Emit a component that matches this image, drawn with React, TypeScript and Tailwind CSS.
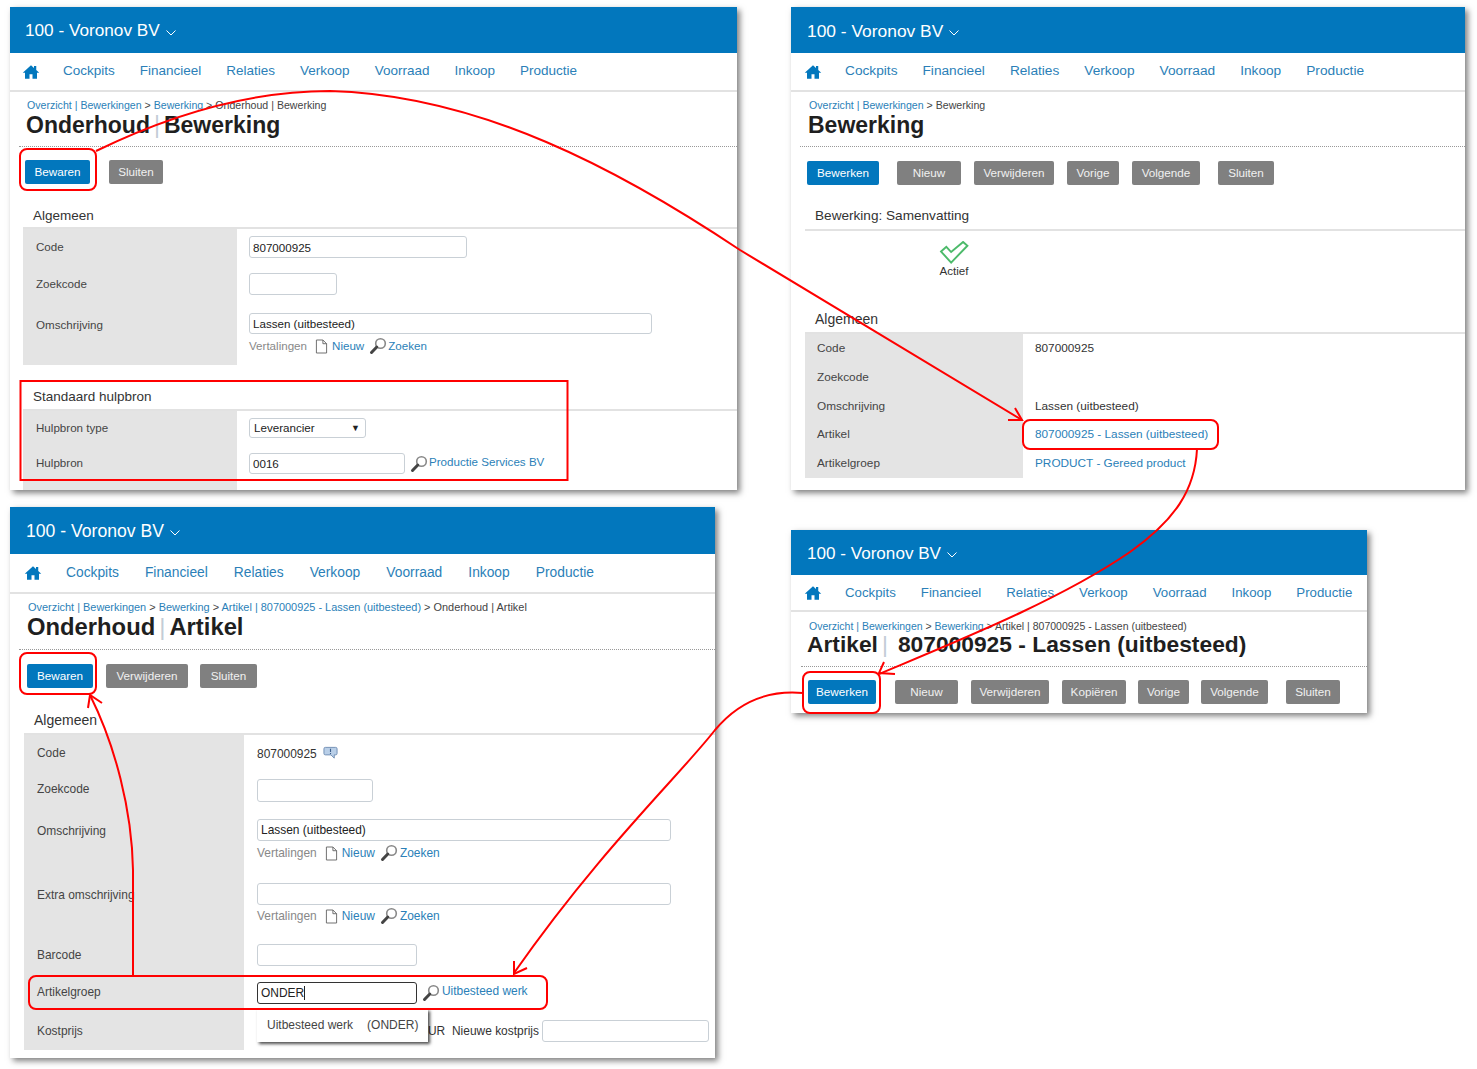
import React from "react";

const blue = "bg-[#0277bd]";

function HomeIcon() {
  return (
    <svg viewBox="0 0 24 24" className="h-[18px] w-[18px] fill-[#0277bd]">
      <path d="M12 3 1 13h3v8h6v-6h4v6h6v-8h3l-4-3.6V4h-3v2.7z" />
    </svg>
  );
}

function SearchIcon() {
  return (
    <svg viewBox="0 0 18 18" className="h-[18px] w-[18px] shrink-0">
      <circle cx="11.5" cy="6.5" r="4.8" fill="#fff" stroke="#888" strokeWidth="1.6" />
      <path d="M7.800 10 2.500 15.500" stroke="#444" strokeWidth="3" strokeLinecap="round" />
    </svg>
  );
}

function DocIcon() {
  return (
    <svg viewBox="0 0 14 16" className="h-[15px] w-[13px] shrink-0">
      <path d="M1.500 1h7l4 4v10h-11z" fill="#fff" stroke="#666" />
      <path d="M8.500 1v4h4" fill="none" stroke="#666" />
    </svg>
  );
}

function NoteIcon() {
  return (
    <svg viewBox="0 0 16 14" className="h-[14px] w-[15px]">
      <path d="M2.500 1h11a1.500 1.500 0 0 1 1.500 1.500v5A1.500 1.500 0 0 1 13.500 9H12v3.500L8.500 9h-6A1.500 1.500 0 0 1 1 7.500v-5A1.500 1.500 0 0 1 2.500 1z" fill="#b9cfe8" stroke="#6f8db3" />
      <path d="M8 2.500v3.500M8 7v1" stroke="#3d5f8c" strokeWidth="1.200" />
    </svg>
  );
}

function TopBars({ header, nav, title, navText, navGap, home }: { header: string; nav: string; title: string; navText: string; navGap: string; home: string }) {
  const items = ["Cockpits", "Financieel", "Relaties", "Verkoop", "Voorraad", "Inkoop", "Productie"];
  return (
    <>
      <div className={`${blue} flex items-center pt-[2px] text-white ${header} ${title}`}>
        <span>100 - Voronov BV</span>
        <svg viewBox="0 0 10 6" className="ml-[6px] mt-[3px] h-[6px] w-[10px] fill-none stroke-white">
          <path d="M.5.5 5 5 9.500.5" />
        </svg>
      </div>
      <div className={`flex items-center border-b-2 border-[#e2e2e2] text-[#2b7fb8] ${nav} ${navText}`}>
        <span className={`flex ${home}`}><HomeIcon /></span>
        <div className={`flex ${navGap}`}>
          {items.map((item) => (
            <span key={item}>{item}</span>
          ))}
        </div>
      </div>
    </>
  );
}

function Btn({ label, w, primary, mr }: { label: string; w: string; primary?: boolean; mr?: string }) {
  return (
    <div className={`flex h-[24px] items-center justify-center rounded-[2px] text-[11.700px] ${w} ${mr ?? ""} ${primary ? "bg-[#0277bd] text-white" : "bg-[#808080] text-[#f0f0f0]"}`}>
      {label}
    </div>
  );
}

function Crumb({ links, rest, className }: { links: string[]; rest: string; className: string }) {
  return (
    <div className={`whitespace-nowrap text-[#444] ${className}`}>
      {links.map((l, i) => (
        <span key={l}>
          {i > 0 && " > "}
          <span className="text-[#2b7fb8]">{l}</span>
        </span>
      ))}
      {" > "}
      {rest}
    </div>
  );
}

function Title({ left, right, className }: { left: string; right: string; className: string }) {
  return (
    <div className={`whitespace-nowrap font-bold text-[#1f1f1f] ${className}`}>
      {left}
      <span className="mx-[4px] font-normal text-[#c3ccd6]">|</span>
      {right}
    </div>
  );
}

function Section({ children, className }: { children: string; className: string }) {
  return <div className={`border-b-2 border-[#e2e2e2] leading-[18px] text-[#333] ${className}`}>{children}</div>;
}

function Row({ label, h, labelCls, valueCls, size = "text-[11.600px]", children }: { label: string; h: string; labelCls: string; valueCls: string; size?: string; children?: React.ReactNode }) {
  return (
    <div className={`flex leading-[16px] ${h} ${size}`}>
      <div className={`shrink-0 whitespace-nowrap bg-[#e4e4e4] text-[#444] ${labelCls}`}>{label}</div>
      <div className={`min-w-0 flex-1 text-[#333] ${valueCls}`}>{children}</div>
    </div>
  );
}

function Field({ w, h, value, dark }: { w: string; h: string; value?: string; dark?: boolean }) {
  return (
    <input
      readOnly
      value={value ?? ""}
      className={`block rounded-[3px] border bg-white px-[3px] text-[#222] outline-none ${w} ${h} ${dark ? "border-[#333]" : "border-[#c9d0d6]"}`}
    />
  );
}

function Translations({ className, zoekenGap = "mr-[1px]" }: { className: string; zoekenGap?: string }) {
  return (
    <div className={`flex items-center leading-[16px] ${className}`}>
      <span className="text-[#888]">Vertalingen</span>
      <span className="ml-[8px] mr-[4px]"><DocIcon /></span>
      <span className="text-[#2b7fb8]">Nieuw</span>
      <span className={`ml-[5px] ${zoekenGap}`}><SearchIcon /></span>
      <span className="text-[#2b7fb8]">Zoeken</span>
    </div>
  );
}

function EditBewerking() {
  return (
    <div className="absolute left-[10px] top-[7px] h-[483px] w-[727px] overflow-hidden bg-white shadow-[3px_3px_6px_rgba(0,0,0,0.5)]">
      <TopBars header="h-[46px] pl-[15px]" title="text-[17.200px]" nav="h-[39px] pl-[12px]" navText="text-[13.500px]" navGap="gap-[25px]" home="mr-[23px]" />
      <div className="h-[55px] border-b border-dotted border-[#999] ml-[9px] pl-[8px] pt-[6px]">
        <Crumb links={["Overzicht | Bewerkingen", "Bewerking"]} rest="Onderhoud | Bewerking" className="text-[10.600px] leading-[14px]" />
        <Title left="Onderhoud" right="Bewerking" className="text-[23px] leading-[26px] -ml-[1px]" />
      </div>
      <div className="flex pl-[15px] pt-[13px]">
        <Btn label="Bewaren" w="w-[65px]" primary mr="mr-[19px]" />
        <Btn label="Sluiten" w="w-[54px]" />
      </div>
      <Section className="ml-[13px] mt-[23px] h-[22px] pl-[10px] text-[13.500px]">Algemeen</Section>
      <div className="ml-[13px]">
        <Row label="Code" h="h-[37px]" labelCls="w-[214px] pl-[13px] pt-[10px]" valueCls="pl-[12px] pt-[7px]">
          <Field w="w-[218px]" h="h-[22px]" value="807000925" />
        </Row>
        <Row label="Zoekcode" h="h-[37px]" labelCls="w-[214px] pl-[13px] pt-[10px]" valueCls="pl-[12px] pt-[7px]">
          <Field w="w-[88px]" h="h-[22px]" />
        </Row>
        <Row label="Omschrijving" h="h-[62px]" labelCls="w-[214px] pl-[13px] pt-[14px]" valueCls="pl-[12px] pt-[10px]">
          <Field w="w-[403px]" h="h-[21px]" value="Lassen (uitbesteed)" />
          <Translations className="mt-[3px]" />
        </Row>
      </div>
      <Section className="ml-[13px] mt-[23px] h-[23px] pl-[10px] text-[13.500px]">Standaard hulpbron</Section>
      <div className="ml-[13px]">
        <Row label="Hulpbron type" h="h-[35px]" labelCls="w-[214px] pl-[13px] pt-[9px]" valueCls="pl-[12px] pt-[7px]">
          <div className="flex h-[20px] w-[117px] items-center justify-between rounded-[3px] border border-[#c9d0d6] pl-[4px] pr-[5px] text-[#222]">
            <span>Leverancier</span>
            <span className="text-[9px]">▼</span>
          </div>
        </Row>
        <Row label="Hulpbron" h="h-[44px]" labelCls="w-[214px] pl-[13px] pt-[9px]" valueCls="flex items-start pl-[12px] pt-[7px]">
          <Field w="w-[156px]" h="h-[21px]" value="0016" />
          <span className="ml-[5px] mr-[1px] mt-[2px]"><SearchIcon /></span>
          <span className="mt-[1px] text-[#2b7fb8]">Productie Services BV</span>
        </Row>
      </div>
    </div>
  );
}

function ViewBewerking() {
  return (
    <div className="absolute left-[791px] top-[7px] h-[483px] w-[674px] overflow-hidden bg-white shadow-[3px_3px_6px_rgba(0,0,0,0.5)]">
      <TopBars header="h-[46px] pl-[16px]" title="text-[17.400px]" nav="h-[39px] pl-[13px]" navText="text-[13.700px]" navGap="gap-[25px]" home="mr-[23px]" />
      <div className="ml-[9px] h-[55px] border-b border-dotted border-[#999] pl-[9px] pt-[6px]">
        <Crumb links={["Overzicht | Bewerkingen"]} rest="Bewerking" className="text-[10.600px] leading-[14px]" />
        <div className="-ml-[1px] text-[23px] font-bold leading-[26px] text-[#1f1f1f]">Bewerking</div>
      </div>
      <div className="flex pl-[16px] pt-[14px]">
        <Btn label="Bewerken" w="w-[72px]" primary mr="mr-[18px]" />
        <Btn label="Nieuw" w="w-[64px]" mr="mr-[13px]" />
        <Btn label="Verwijderen" w="w-[80px]" mr="mr-[13px]" />
        <Btn label="Vorige" w="w-[52px]" mr="mr-[13px]" />
        <Btn label="Volgende" w="w-[68px]" mr="mr-[18px]" />
        <Btn label="Sluiten" w="w-[56px]" />
      </div>
      <Section className="ml-[14px] mt-[22px] h-[24px] pl-[10px] text-[13.600px]">Bewerking: Samenvatting</Section>
      <div className="ml-[14px] flex h-[79px] w-[298px] flex-col items-center pt-[10px]">
        <svg viewBox="0 0 30 24" className="h-[23px] w-[30px] fill-none stroke-[#4cba6a] stroke-[2]">
          <path d="M1.500 11 7 6l5 5.500L24.500 1 29 5 12 22.500z" />
        </svg>
        <span className="-mt-[1px] text-[11.600px] leading-[16px] text-[#333]">Actief</span>
      </div>
      <Section className="ml-[14px] h-[24px] pl-[10px] text-[14px]">Algemeen</Section>
      <div className="ml-[14px]">
        <Row label="Code" h="h-[29px]" size="text-[11.800px]" labelCls="w-[218px] pl-[12px] pt-[6px]" valueCls="pl-[12px] pt-[6px]">807000925</Row>
        <Row label="Zoekcode" h="h-[29px]" size="text-[11.800px]" labelCls="w-[218px] pl-[12px] pt-[6px]" valueCls="pl-[12px] pt-[6px]" />
        <Row label="Omschrijving" h="h-[29px]" size="text-[11.800px]" labelCls="w-[218px] pl-[12px] pt-[6px]" valueCls="pl-[12px] pt-[6px]">Lassen (uitbesteed)</Row>
        <Row label="Artikel" h="h-[29px]" size="text-[11.800px]" labelCls="w-[218px] pl-[12px] pt-[5px]" valueCls="pl-[12px] pt-[5px]">
          <span className="text-[#2b7fb8]">807000925 - Lassen (uitbesteed)</span>
        </Row>
        <Row label="Artikelgroep" h="h-[28px]" size="text-[11.800px]" labelCls="w-[218px] pl-[12px] pt-[5px]" valueCls="pl-[12px] pt-[5px]">
          <span className="text-[#2b7fb8]">PRODUCT - Gereed product</span>
        </Row>
      </div>
    </div>
  );
}

function EditArtikel() {
  const size = "text-[11.950px]";
  return (
    <div className="absolute left-[10px] top-[507px] h-[551px] w-[705px] overflow-hidden bg-white shadow-[3px_3px_6px_rgba(0,0,0,0.5)]">
      <TopBars header="h-[47px] pl-[16px]" title="text-[17.600px]" nav="h-[40px] pl-[14px]" navText="text-[13.800px]" navGap="gap-[26px]" home="mr-[24px]" />
      <div className="ml-[9px] h-[56px] border-b border-dotted border-[#999] pl-[9px] pt-[6px]">
        <Crumb links={["Overzicht | Bewerkingen", "Bewerking", "Artikel | 807000925 - Lassen (uitbesteed)"]} rest="Onderhoud | Artikel" className="text-[10.930px] leading-[14px]" />
        <Title left="Onderhoud" right="Artikel" className="text-[23.800px] leading-[26px] -ml-[1px]" />
      </div>
      <div className="flex pl-[17px] pt-[14px]">
        <Btn label="Bewaren" w="w-[66px]" primary mr="mr-[13px]" />
        <Btn label="Verwijderen" w="w-[82px]" mr="mr-[12px]" />
        <Btn label="Sluiten" w="w-[57px]" />
      </div>
      <Section className="ml-[14px] mt-[23px] h-[24px] pl-[10px] text-[14px]">Algemeen</Section>
      <div className="relative ml-[14px]">
        <Row label="Code" h="h-[36px]" size={size} labelCls="w-[220px] pl-[13px] pt-[10px]" valueCls="flex items-start gap-[6px] pl-[13px] pt-[11px]">
          807000925
          <NoteIcon />
        </Row>
        <Row label="Zoekcode" h="h-[38px]" size={size} labelCls="w-[220px] pl-[13px] pt-[10px]" valueCls="pl-[13px] pt-[8px]">
          <Field w="w-[116px]" h="h-[23px]" />
        </Row>
        <Row label="Omschrijving" h="h-[64px]" size={size} labelCls="w-[220px] pl-[13px] pt-[14px]" valueCls="pl-[13px] pt-[10px]">
          <Field w="w-[414px]" h="h-[22px]" value="Lassen (uitbesteed)" />
          <Translations className="mt-[3px]" zoekenGap="mr-[2px]" />
        </Row>
        <Row label="Extra omschrijving" h="h-[61px]" size={size} labelCls="w-[220px] pl-[13px] pt-[14px]" valueCls="pl-[13px] pt-[10px]">
          <Field w="w-[414px]" h="h-[22px]" />
          <Translations className="mt-[2px]" zoekenGap="mr-[2px]" />
        </Row>
        <Row label="Barcode" h="h-[38px]" size={size} labelCls="w-[220px] pl-[13px] pt-[13px]" valueCls="pl-[13px] pt-[10px]">
          <Field w="w-[160px]" h="h-[22px]" />
        </Row>
        <Row label="Artikelgroep" h="h-[39px]" size={size} labelCls="w-[220px] pl-[13px] pt-[12px]" valueCls="flex items-start pl-[13px] pt-[10px]">
          <div className="relative">
            <Field w="w-[160px]" h="h-[22px]" value="ONDER" dark />
            <span className="absolute left-[47px] top-[4px] h-[14px] w-px bg-[#222]" />
          </div>
          <span className="ml-[5px] mr-[2px] mt-[2px]"><SearchIcon /></span>
          <span className="mt-[1px] text-[#2b7fb8]">Uitbesteed werk</span>
        </Row>
        <Row label="Kostprijs" h="h-[39px]" size={size} labelCls="w-[220px] pl-[13px] pt-[12px]" valueCls="flex items-start pl-[184px] pt-[9px]">
          <span className="mt-[3px] w-[24px]">UR</span>
          <span className="mt-[3px] whitespace-nowrap">Nieuwe kostprijs</span>
          <span className="ml-[3px]"><Field w="w-[167px]" h="h-[22px]" /></span>
        </Row>
        <div className="absolute left-[233px] top-[274px] flex h-[33px] w-[171px] items-start bg-white pl-[10px] pt-[8px] text-[12px] leading-[16px] text-[#444] shadow-[2px_2px_3px_rgba(0,0,0,0.7)]">
          <span>Uitbesteed werk</span>
          <span className="ml-[14px]">(ONDER)</span>
        </div>
      </div>
    </div>
  );
}

function ViewArtikel() {
  return (
    <div className="absolute left-[791px] top-[530px] h-[183px] w-[576px] overflow-hidden bg-white shadow-[3px_3px_6px_rgba(0,0,0,0.5)]">
      <TopBars header="h-[45px] pl-[16px]" title="text-[17.100px]" nav="h-[37px] pl-[13px] pt-[1px]" navText="text-[13.250px]" navGap="gap-[25px]" home="mr-[23px]" />
      <div className="ml-[10px] h-[55px] border-b border-dotted border-[#999] pl-[8px] pt-[7px]">
        <Crumb links={["Overzicht | Bewerkingen", "Bewerking"]} rest="Artikel | 807000925 - Lassen (uitbesteed)" className="text-[10.500px] leading-[14px]" />
        <div className="-ml-[2px] whitespace-nowrap text-[22.800px] font-bold leading-[23px] text-[#1f1f1f]">
          Artikel
          <span className="ml-[4px] mr-[10px] font-normal text-[#c3ccd6]">|</span>
          807000925 - Lassen (uitbesteed)
        </div>
      </div>
      <div className="flex pl-[17px] pt-[13px]">
        <Btn label="Bewerken" w="w-[68px]" primary mr="mr-[19px]" />
        <Btn label="Nieuw" w="w-[63px]" mr="mr-[13px]" />
        <Btn label="Verwijderen" w="w-[78px]" mr="mr-[13px]" />
        <Btn label="Kopiëren" w="w-[64px]" mr="mr-[12px]" />
        <Btn label="Vorige" w="w-[51px]" mr="mr-[12px]" />
        <Btn label="Volgende" w="w-[67px]" mr="mr-[18px]" />
        <Btn label="Sluiten" w="w-[54px]" />
      </div>
    </div>
  );
}

// rode pijlen en kaders over de vensters heen
function Annotations() {
  return (
    <svg viewBox="0 0 1477 1069" className="absolute left-0 top-0 h-[1069px] w-[1477px] fill-none stroke-[#f00] stroke-[2]">
      <rect x="20" y="149" width="76" height="41" rx="7" />
      <rect x="20.500" y="381" width="547" height="99" />
      <path d="M96 151C170 115 250 91 330 91C480 95 620 170 740 250L1022 420" />
      <path d="M1015 408 1022 420 1008 420" />
      <rect x="1023" y="420" width="195" height="29" rx="7" />
      <path d="M1197 449C1195 490 1175 520 1130 552C1060 600 960 640 879 674" />
      <path d="M884 662 879 673 895 674" />
      <rect x="803" y="672" width="77" height="41" rx="7" />
      <path d="M803 693C770 690 740 700 715 730C680 775 600 850 514 973" />
      <path d="M514 961 514 974 527 968" />
      <rect x="29" y="976" width="518" height="33" rx="7" />
      <path d="M133 976V870C132 810 115 745 90 695" />
      <path d="M88 708 90 695 102 703" />
      <rect x="20" y="653" width="76" height="41" rx="7" />
    </svg>
  );
}

export default function App() {
  return (
    <div className="relative h-[1069px] w-[1477px] overflow-hidden bg-white font-['Liberation_Sans',Arial,sans-serif]">
      <EditBewerking />
      <ViewBewerking />
      <EditArtikel />
      <ViewArtikel />
      <Annotations />
    </div>
  );
}
